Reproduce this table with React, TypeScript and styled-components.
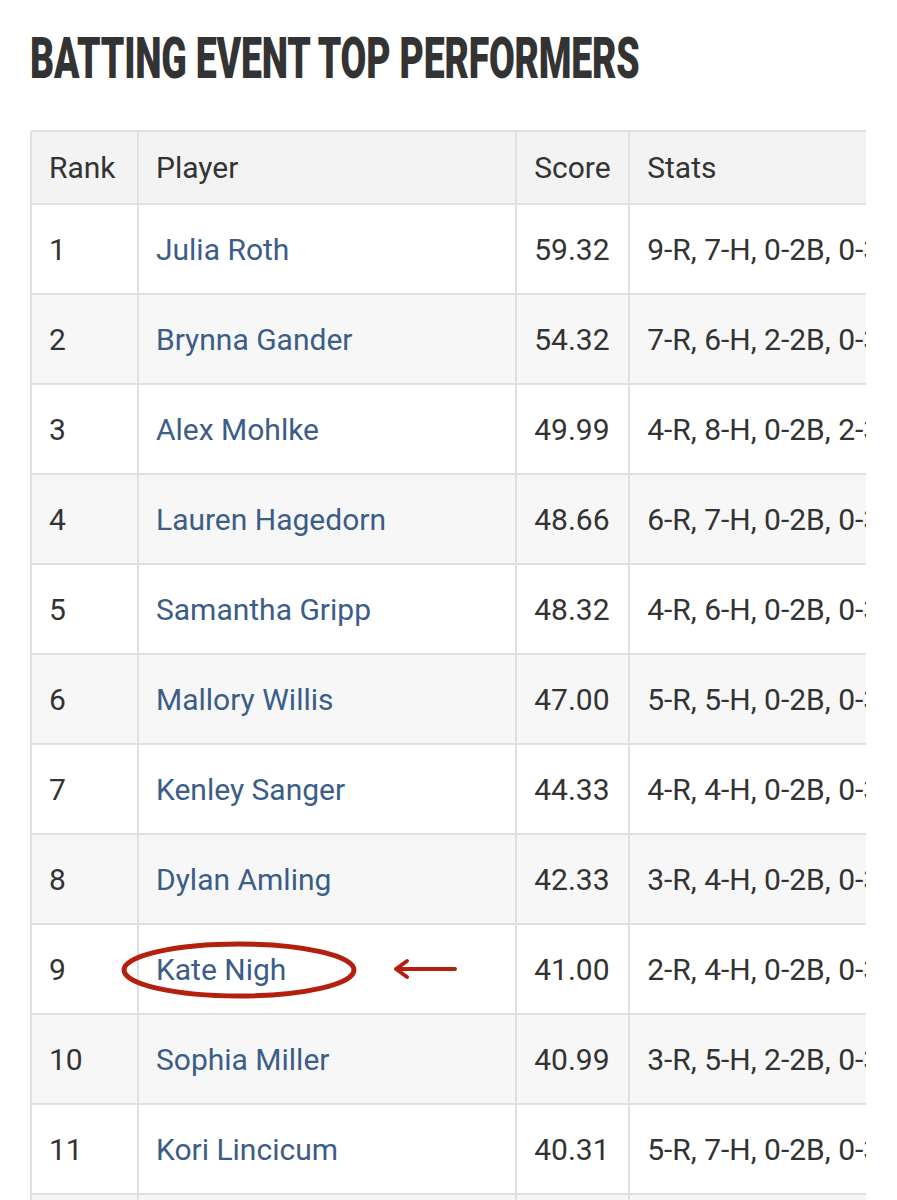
import React from 'react'
import styled, { createGlobalStyle } from 'styled-components'

const GlobalStyle = createGlobalStyle`
  html, body {
    margin: 0;
    padding: 0;
    background: #fff;
  }
  body {
    font-family: Roboto, 'Liberation Sans', sans-serif;
    color: #333;
  }
`

const Pagina = styled.div`
  width: 897px;
  height: 1200px;
  overflow: hidden;
  padding: 34px 0 0 30px;
  box-sizing: border-box;
`

const Titulo = styled.h2`
  margin: 0 0 48px 0;
  height: 48px;
  font-family: Roboto, 'Liberation Sans', sans-serif;
  font-weight: 900;
  font-size: 58px;
  line-height: 48px;
  color: #333;
  white-space: nowrap;
`

const TituloTexto = styled.span`
  display: inline-block;
  transform: scaleX(0.645);
  transform-origin: left center;
  letter-spacing: -0.3px;
`

const Rolagem = styled.div`
  width: 836px;
  overflow: hidden;
  border-top-left-radius: 4px;
`

const Tabela = styled.table`
  border-collapse: collapse;
  width: 1150px;
  font-size: 30px;
  color: #333;
`

const Cabecalho = styled.th<{ $largura: number }>`
  width: ${(p) => p.$largura}px;
  height: 73px;
  padding: 0 17px;
  text-align: left;
  font-weight: 400;
  background: #f3f3f3;
  border: 2px solid #e0e0e0;
  box-sizing: border-box;
`

const Linha = styled.tr<{ $par: boolean }>`
  background: ${(p) => (p.$par ? '#f7f7f7' : '#fff')};
`

const Celula = styled.td`
  height: 88px;
  padding: 0 17px;
  border: 2px solid #e0e0e0;
  vertical-align: middle;
  white-space: nowrap;
`

const CelulaJogador = styled(Celula)`
  position: relative;
`

const Link = styled.a`
  color: #3b5d88;
  text-decoration: none;
`

const Circulo = styled.svg`
  position: absolute;
  left: -20px;
  top: 15px;
  pointer-events: none;
`

const Seta = styled.svg`
  position: absolute;
  left: 252px;
  top: 32px;
  pointer-events: none;
`

type Jogador = {
  rank: number
  nome: string
  score: string
  stats: string
  destaque?: boolean
}

const jogadores: Jogador[] = [
  { rank: 1, nome: 'Julia Roth', score: '59.32', stats: '9-R, 7-H, 0-2B, 0-3B, 0-HR' },
  { rank: 2, nome: 'Brynna Gander', score: '54.32', stats: '7-R, 6-H, 2-2B, 0-3B, 0-HR' },
  { rank: 3, nome: 'Alex Mohlke', score: '49.99', stats: '4-R, 8-H, 0-2B, 2-3B, 0-HR' },
  { rank: 4, nome: 'Lauren Hagedorn', score: '48.66', stats: '6-R, 7-H, 0-2B, 0-3B, 0-HR' },
  { rank: 5, nome: 'Samantha Gripp', score: '48.32', stats: '4-R, 6-H, 0-2B, 0-3B, 0-HR' },
  { rank: 6, nome: 'Mallory Willis', score: '47.00', stats: '5-R, 5-H, 0-2B, 0-3B, 0-HR' },
  { rank: 7, nome: 'Kenley Sanger', score: '44.33', stats: '4-R, 4-H, 0-2B, 0-3B, 0-HR' },
  { rank: 8, nome: 'Dylan Amling', score: '42.33', stats: '3-R, 4-H, 0-2B, 0-3B, 0-HR' },
  { rank: 9, nome: 'Kate Nigh', score: '41.00', stats: '2-R, 4-H, 0-2B, 0-3B, 0-HR', destaque: true },
  { rank: 10, nome: 'Sophia Miller', score: '40.99', stats: '3-R, 5-H, 2-2B, 0-3B, 0-HR' },
  { rank: 11, nome: 'Kori Lincicum', score: '40.31', stats: '5-R, 7-H, 0-2B, 0-3B, 0-HR' },
  { rank: 12, nome: '', score: '', stats: '' },
]

const App: React.FC = () => {
  return (
    <>
      <GlobalStyle />
      <Pagina>
        <Titulo>
          <TituloTexto>BATTING EVENT TOP PERFORMERS</TituloTexto>
        </Titulo>
        <Rolagem>
          <Tabela>
            <thead>
              <tr>
                <Cabecalho $largura={107}>Rank</Cabecalho>
                <Cabecalho $largura={379}>Player</Cabecalho>
                <Cabecalho $largura={113}>Score</Cabecalho>
                <Cabecalho $largura={551}>Stats</Cabecalho>
              </tr>
            </thead>
            <tbody>
              {jogadores.map((j) => (
                <Linha key={j.rank} $par={j.rank % 2 === 0}>
                  <Celula>{j.nome ? j.rank : ''}</Celula>
                  <CelulaJogador>
                    <Link href="#">{j.nome}</Link>
                    {j.destaque && (
                      <>
                        <Circulo width="240" height="60" viewBox="0 0 240 60">
                          <ellipse
                            cx="120"
                            cy="30"
                            rx="115"
                            ry="26"
                            fill="none"
                            stroke="#b3200e"
                            strokeWidth="5"
                          />
                        </Circulo>
                        <Seta width="68" height="24" viewBox="0 0 68 24">
                          <path
                            d="M64 12 H5 M16 4 L5 12 L16 20"
                            fill="none"
                            stroke="#b3200e"
                            strokeWidth="4"
                            strokeLinecap="round"
                            strokeLinejoin="round"
                          />
                        </Seta>
                      </>
                    )}
                  </CelulaJogador>
                  <Celula>{j.score}</Celula>
                  <Celula>{j.stats}</Celula>
                </Linha>
              ))}
            </tbody>
          </Tabela>
        </Rolagem>
      </Pagina>
    </>
  )
}

export default App
